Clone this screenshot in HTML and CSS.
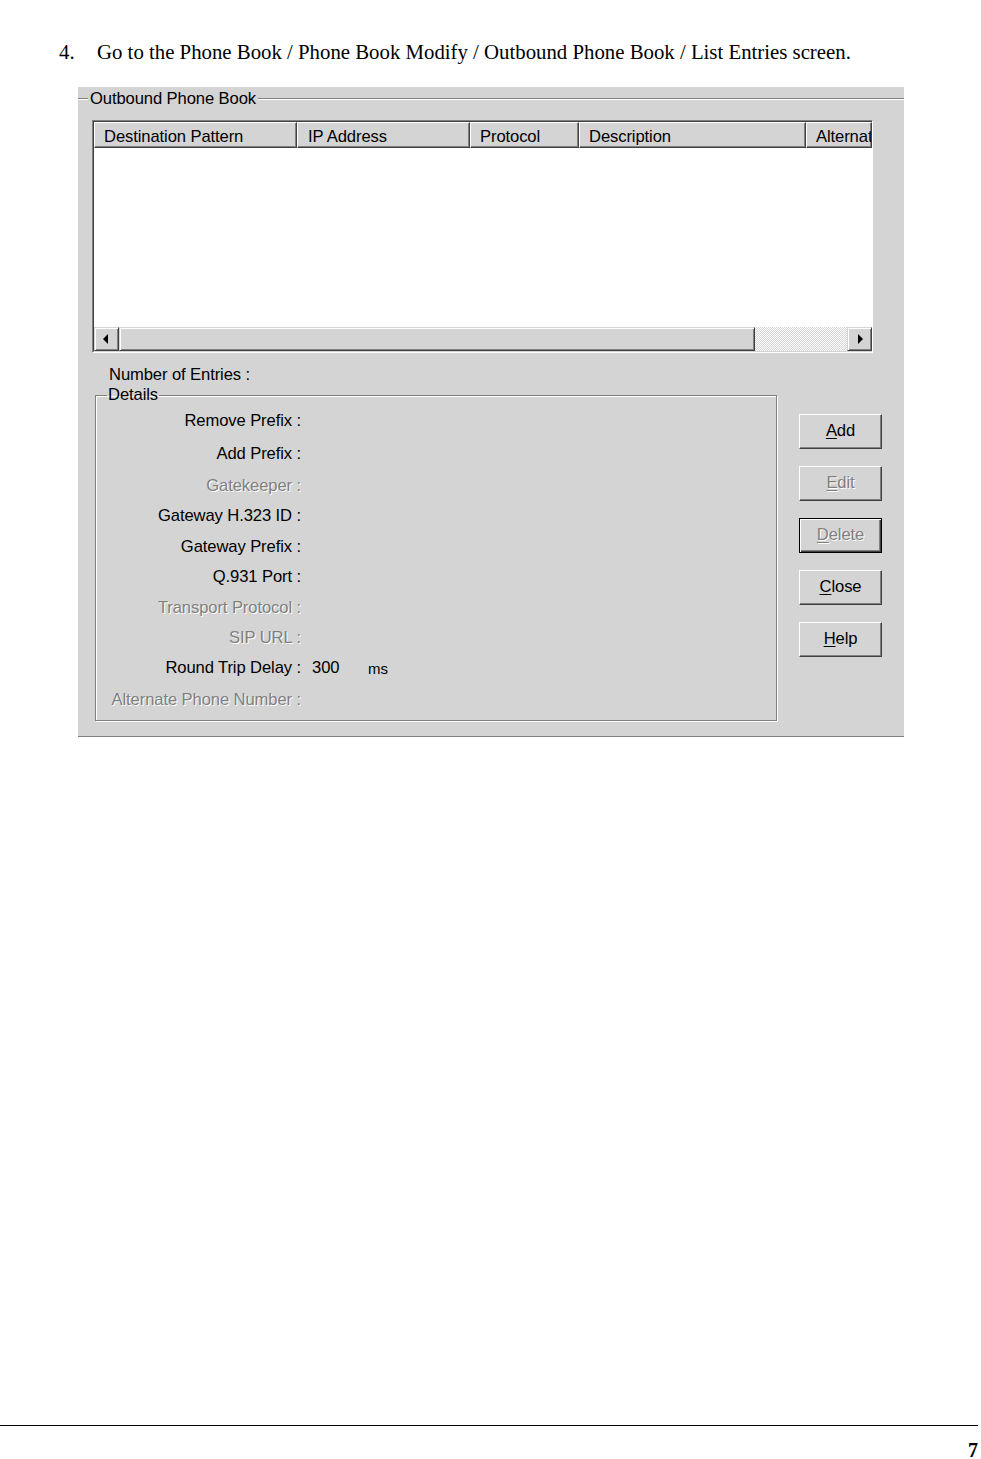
FILE: index.html
```html
<!DOCTYPE html>
<html>
<head>
<meta charset="utf-8">
<link rel="stylesheet" href="styles.css">
</head>
<body>
<div class="page">
  <p class="step"><span class="num">4.</span><span>Go to the Phone Book / Phone Book Modify / Outbound Phone Book / List Entries screen.</span></p>

  <div class="dialog">
    <div class="group-top"><span class="legend">Outbound Phone Book</span></div>

    <div class="listview">
      <div class="lv-header">
        <div class="hcell c1">Destination Pattern</div>
        <div class="hcell c2">IP Address</div>
        <div class="hcell c3">Protocol</div>
        <div class="hcell c4">Description</div>
        <div class="hcell c5">Alternat</div>
      </div>
      <div class="lv-body"></div>
      <div class="hscroll">
        <div class="sbtn"><span class="tri left"></span></div>
        <div class="thumb"></div>
        <div class="track"></div>
        <div class="sbtn"><span class="tri right"></span></div>
      </div>
    </div>

    <div class="entries">Number of Entries :</div>

    <div class="lower">
      <fieldset class="details">
        <legend>Details</legend>
        <div class="row r33"><span class="lbl">Remove Prefix :</span></div>
        <div class="row r33"><span class="lbl">Add Prefix :</span></div>
        <div class="row r31"><span class="lbl dis">Gatekeeper :</span></div>
        <div class="row r30"><span class="lbl">Gateway H.323 ID :</span></div>
        <div class="row r31"><span class="lbl">Gateway Prefix :</span></div>
        <div class="row r30"><span class="lbl">Q.931 Port :</span></div>
        <div class="row r31"><span class="lbl dis">Transport Protocol :</span></div>
        <div class="row r29"><span class="lbl dis">SIP URL :</span></div>
        <div class="row r32"><span class="lbl">Round Trip Delay :</span><span class="val">300</span><span class="unit">ms</span></div>
        <div class="row r31"><span class="lbl dis">Alternate Phone Number :</span></div>
      </fieldset>

      <div class="buttons">
        <div class="btn"><span class="u">A</span>dd</div>
        <div class="btn dis"><span class="u">E</span>dit</div>
        <div class="btn dis default"><span class="u">D</span>elete</div>
        <div class="btn"><span class="u">C</span>lose</div>
        <div class="btn"><span class="u">H</span>elp</div>
      </div>
    </div>
  </div>

  <div class="footer">
    <div class="rule"></div>
    <div class="pagenum">7</div>
  </div>
</div>
</body>
</html>
```

FILE: styles.css
```css
html, body {
  margin: 0;
  padding: 0;
  background: #ffffff;
}

.page {
  width: 981px;
  height: 1459px;
  display: flex;
  flex-direction: column;
  font-family: "Liberation Serif", "Times New Roman", serif;
  color: #000;
}

.step {
  margin: 40px 0 0 59px;
  font-size: 20.8px;
  line-height: 24px;
  display: flex;
}

.step .num {
  width: 38px;
  flex: none;
}

.dialog {
  margin: 23px 0 0 78px;
  width: 826px;
  height: 650px;
  background: #d4d4d4;
  border-bottom: 1px solid #808080;
  box-shadow: 0 1px 0 #fff;
  font-family: "Liberation Sans", Arial, sans-serif;
  font-size: 16.6px;
  letter-spacing: -0.1px;
  display: flex;
  flex-direction: column;
  box-sizing: border-box;
}

.group-top {
  position: relative;
  border-top: 1px solid #808080;
  box-shadow: inset 0 1px 0 #fff;
  margin-top: 11px;
  height: 22px;
  box-sizing: border-box;
}

.group-top .legend {
  position: absolute;
  left: 10px;
  top: -10px;
  background: #d4d4d4;
  padding: 0 2px;
  line-height: 20px;
}

.listview {
  margin: 0 0 0 14px;
  width: 781px;
  height: 233px;
  box-sizing: border-box;
  border-top: 1px solid #808080;
  border-left: 1px solid #808080;
  border-right: 1px solid #fff;
  border-bottom: 1px solid #fff;
  display: flex;
  flex-direction: column;
  background: #fff;
}

.lv-header {
  display: flex;
  height: 27px;
  border-top: 1px solid #404040;
  border-left: 1px solid #404040;
  box-sizing: border-box;
  background: #d4d4d4;
  overflow: hidden;
}

.hcell {
  box-sizing: border-box;
  height: 26px;
  line-height: 27px;
  padding-left: 9px;
  border-top: 1px solid #fff;
  border-left: 1px solid #fff;
  border-right: 1px solid #404040;
  border-bottom: 1px solid #404040;
  box-shadow: inset -1px -1px 0 #808080;
  white-space: nowrap;
  overflow: hidden;
  flex: none;
}

.c1 { width: 203px; }
.c2 { width: 173px; padding-left: 10px; }
.c3 { width: 109px; }
.c4 { width: 227px; }
.c5 { width: 66px; }

.lv-body {
  flex: 1;
  background: #fff;
  border-left: 1px solid #404040;
}

.hscroll {
  display: flex;
  height: 25px;
  border-left: 1px solid #404040;
  border-bottom: 1px solid #d4d4d4;
  box-sizing: border-box;
  background: #d4d4d4;
}

.sbtn, .thumb {
  box-sizing: border-box;
  border-top: 1px solid #d4d4d4;
  border-left: 1px solid #d4d4d4;
  border-right: 1px solid #404040;
  border-bottom: 1px solid #404040;
  box-shadow: inset 1px 1px 0 #fff, inset -1px -1px 0 #808080;
  background: #d4d4d4;
  height: 24px;
}

.sbtn {
  width: 25px;
  display: flex;
  align-items: center;
  justify-content: center;
}

.thumb {
  width: 636px;
}

.track {
  flex: 1;
  height: 24px;
  background-color: #fff;
  background-image: repeating-conic-gradient(#d4d4d4 0 25%, #fff 0 50%);
  background-size: 2px 2px;
}

.tri {
  width: 0;
  height: 0;
  border-top: 5px solid transparent;
  border-bottom: 5px solid transparent;
}

.tri.left {
  border-right: 5px solid #000;
  margin-right: 2px;
}

.tri.right {
  border-left: 5px solid #000;
  margin-left: 2px;
}

.entries {
  margin: 12px 0 0 31px;
  line-height: 20px;
  height: 20px;
}

.lower {
  display: flex;
  align-items: flex-start;
  margin-left: 17px;
}

.details {
  margin: 0;
  padding: 0;
  width: 682px;
  height: 336px;
  box-sizing: border-box;
  border: 1px solid #808080;
  box-shadow: 1px 1px 0 #fff, inset 1px 1px 0 #fff;
  min-width: 0;
}

.details legend {
  padding: 0 1px;
  margin-left: 11px;
  line-height: 20px;
}

.row {
  display: flex;
  align-items: center;
  height: 31px;
  white-space: nowrap;
}

.row.r33 { height: 33px; margin-top: -1px; }
.row.r33 + .row.r33 { margin-top: 0; }
.row.r32 { height: 32px; }
.row.r31 { height: 31px; }
.row.r30 { height: 30px; }
.row.r29 { height: 29px; }

.lbl {
  width: 205px;
  text-align: right;
  flex: none;
}

.lbl.dis, .btn.dis {
  color: #808080;
  text-shadow: 1px 1px 0 #fff;
}

.val {
  margin-left: 11px;
  width: 56px;
}

.unit {
  font-size: 15px;
}

.buttons {
  margin: 29px 0 0 22px;
  display: flex;
  flex-direction: column;
  gap: 17px;
}

.btn {
  width: 83px;
  height: 35px;
  box-sizing: border-box;
  border-top: 1px solid #fff;
  border-left: 1px solid #fff;
  border-right: 1px solid #404040;
  border-bottom: 1px solid #404040;
  box-shadow: inset -1px -1px 0 #808080;
  display: flex;
  align-items: center;
  justify-content: center;
  padding-bottom: 1px;
}

.btn.default {
  border: 1px solid #000;
  box-shadow: inset 1px 1px 0 #fff, inset -1px -1px 0 #404040, inset -2px -2px 0 #808080;
}

.u {
  text-decoration: underline;
  text-underline-offset: 2px;
}

.footer {
  margin-top: auto;
  height: 34px;
}

.rule {
  width: 978px;
  height: 1px;
  background: #000;
}

.pagenum {
  text-align: right;
  width: 978px;
  font-weight: bold;
  font-size: 20px;
  line-height: 16px;
  margin-top: 16px;
}
```
